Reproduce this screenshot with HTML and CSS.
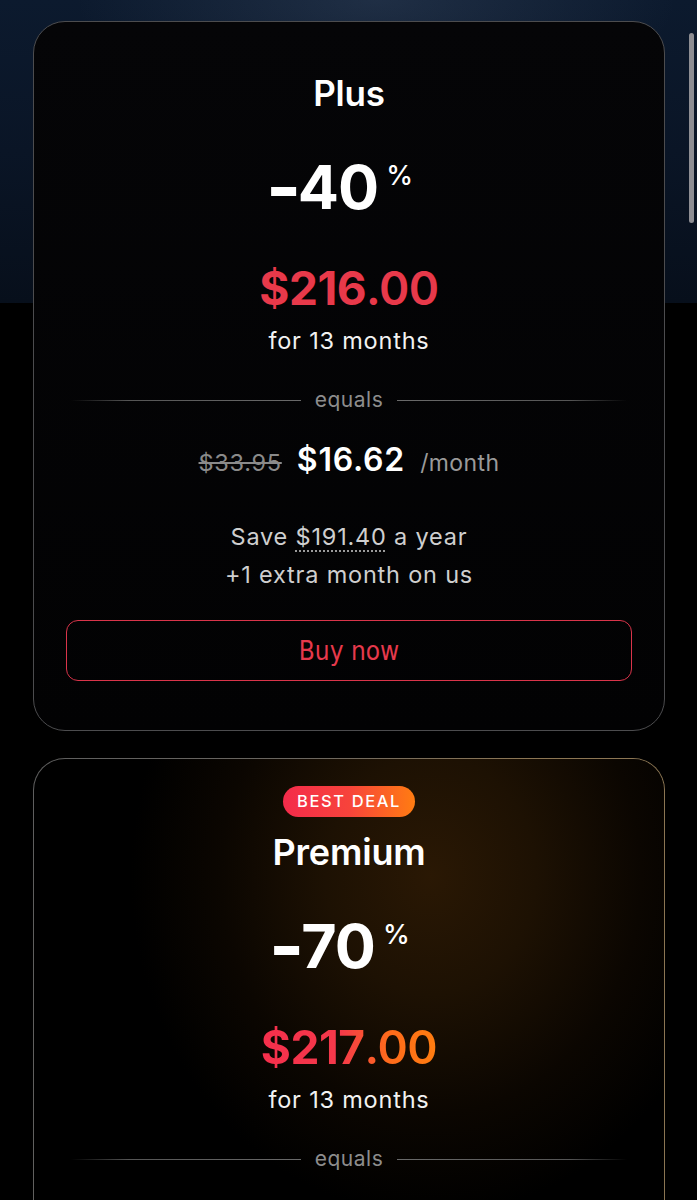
FILE: index.html
```html
<!DOCTYPE html>
<html lang="en">
<head>
<meta charset="utf-8">
<title>Plans</title>
<link rel="stylesheet" href="styles.css">
</head>
<body>
<div class="backdrop"></div>
<main class="plans">
  <section class="card card-plus">
    <h2 class="title">Plus</h2>
    <div class="discount"><span class="minus">-</span>40<span class="pct">%</span></div>
    <div class="price">$216<span class="cents">.00</span></div>
    <div class="period">for 13 months</div>
    <div class="equals"><span class="line line-l"></span><span class="eq-text">equals</span><span class="line line-r"></span></div>
    <div class="monthly"><s class="old">$33.95</s><span class="now">$16.62</span><span class="per">/month</span></div>
    <p class="save">Save <span class="dotted">$191.40</span> a year<br>+1 extra month on us</p>
    <button class="buy">Buy now</button>
  </section>

  <section class="card card-premium">
    <div class="badge">BEST DEAL</div>
    <h2 class="title title-premium">Premium</h2>
    <div class="discount"><span class="minus">-</span>70<span class="pct">%</span></div>
    <div class="price price-grad">$217<span class="cents">.00</span></div>
    <div class="period">for 13 months</div>
    <div class="equals"><span class="line line-l"></span><span class="eq-text">equals</span><span class="line line-r"></span></div>
    <div class="monthly"><span class="now">$16.69</span><span class="per">/month</span></div>
    <p class="save">Save <span class="dotted">$190.71</span> a year<br>+1 extra month on us</p>
    <button class="buy buy-premium">Buy now</button>
  </section>
</main>
<div class="scrollbar"></div>
</body>
</html>
```

FILE: styles.css
```css
html {
  scrollbar-width: none;
}
html::-webkit-scrollbar {
  display: none;
}
* {
  box-sizing: border-box;
}
body {
  margin: 0;
  background: #000;
  font-family: "Inter", "Noto Sans", sans-serif;
  color: #fff;
  position: relative;
}
.backdrop {
  position: absolute;
  left: 0;
  top: 0;
  width: 100%;
  height: 303px;
  background:
    radial-gradient(ellipse 300px 110px at 54% 0%, rgba(100, 120, 150, 0.22), rgba(100, 120, 150, 0) 100%),
    linear-gradient(180deg, #0c1a2e 0%, #0a1526 50%, #070f1b 100%);
  z-index: 0;
}
.plans {
  position: relative;
  z-index: 1;
  padding: 21px 32px 40px 33px;
  display: flex;
  flex-direction: column;
  gap: 27px;
}
.card {
  width: 632px;
  border-radius: 32px;
  border: 1.5px solid #4c4c4e;
  background: linear-gradient(180deg, #050507 0%, #020203 100%);
  display: flex;
  flex-direction: column;
  align-items: center;
  padding: 49px 32px 49px;
}
.card-premium {
  padding-top: 27px;
  border: 1.5px solid transparent;
  background:
    radial-gradient(ellipse 300px 340px at 63% 16%, #2a1804 0%, #1d1103 35%, #0b0601 70%, rgba(0, 0, 0, 0) 100%) padding-box,
    radial-gradient(ellipse 360px 200px at 50% 100%, #1c0504 0%, rgba(0, 0, 0, 0) 100%) padding-box,
    linear-gradient(#000, #000) padding-box,
    linear-gradient(100deg, #5e5e5e 0%, #6a6660 35%, #8c7654 65%, #8a7552 100%) border-box;
}
.badge {
  height: 31px;
  line-height: 31px;
  padding: 0 14px;
  border-radius: 16px;
  background: linear-gradient(90deg, #f42b4b 0%, #f7433b 50%, #ff7c12 100%);
  font-size: 16.5px;
  font-weight: 500;
  letter-spacing: 1.6px;
  color: #fff;
}
.title {
  margin: 0;
  font-size: 35px;
  line-height: 44px;
  font-weight: 600;
  letter-spacing: -0.2px;
}
.title-premium {
  margin-top: 13px;
  font-size: 36px;
}
.discount {
  margin-top: 37px;
  font-size: 61px;
  line-height: 70px;
  font-weight: 700;
  letter-spacing: -1px;
  display: flex;
  align-items: flex-start;
  padding-right: 16px;
}
.minus {
  font-weight: 900;
  margin-right: 1px;
  transform: scaleX(1.2);
}
.pct {
  font-size: 27px;
  line-height: 27px;
  font-weight: 500;
  margin-top: 10px;
  margin-left: 8px;
  letter-spacing: 0;
}
.price {
  margin-top: 38px;
  font-size: 46px;
  line-height: 56px;
  font-weight: 700;
  color: #e8394a;
  letter-spacing: -0.5px;
}
.cents {
  font-weight: 600;
}
.price-grad {
  background: linear-gradient(90deg, #f52f4c 0%, #f5394a 45%, #fe6a1c 72%, #ff7d10 100%);
  -webkit-background-clip: text;
  background-clip: text;
  color: transparent;
}
.period {
  margin-top: 10px;
  font-size: 23.5px;
  line-height: 30px;
  letter-spacing: 0.8px;
  color: #f2f2f2;
}
.equals {
  margin-top: 29px;
  width: 100%;
  height: 30px;
  display: flex;
  align-items: center;
  padding: 0 5px;
  gap: 14px;
}
.line {
  flex: 1;
  height: 1px;
}
.line-l {
  background: linear-gradient(90deg, rgba(90, 90, 90, 0) 0%, #555 25%, #6a6a6a 100%);
}
.line-r {
  background: linear-gradient(90deg, #6a6a6a 0%, #555 75%, rgba(90, 90, 90, 0) 100%);
}
.eq-text {
  font-size: 21px;
  letter-spacing: 0.5px;
  color: #8d8d8d;
  line-height: 30px;
}
.monthly {
  margin-top: 25px;
  height: 40px;
  display: flex;
  align-items: baseline;
  gap: 15px;
  line-height: 40px;
}
.old {
  font-size: 23.5px;
  letter-spacing: 0.7px;
  color: #8a8a8a;
  text-decoration-thickness: 1.5px;
}
.now {
  font-size: 32px;
  font-weight: 600;
  letter-spacing: 0.8px;
  color: #fff;
}
.per {
  font-size: 23px;
  letter-spacing: 0.4px;
  color: #9a9a9a;
}
.save {
  margin: 38px 0 0;
  font-size: 23.5px;
  line-height: 38px;
  letter-spacing: 0.8px;
  color: #cfcfcf;
  text-align: center;
}
.dotted {
  text-decoration: underline dotted #9a9a9a;
  text-decoration-thickness: 1.5px;
  text-underline-offset: 5px;
}
.buy {
  margin-top: 26px;
  width: 100%;
  height: 61px;
  border: 1.5px solid #d9344a;
  border-radius: 12px;
  background: transparent;
  color: #e6394c;
  font-family: "DejaVu Sans Condensed", "DejaVu Sans", sans-serif;
  font-stretch: condensed;
  font-size: 26px;
}
.scrollbar {
  position: fixed;
  right: 3px;
  top: 33px;
  width: 5px;
  height: 190px;
  border-radius: 3px;
  background: #8e8e93;
  z-index: 5;
}
```
